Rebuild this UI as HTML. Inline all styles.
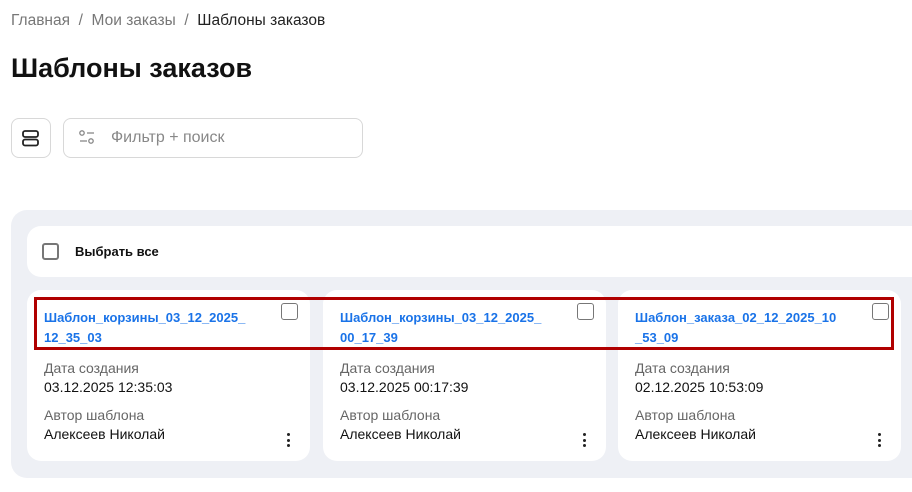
<!DOCTYPE html>
<html><head><meta charset="utf-8"><style>
*{box-sizing:border-box;margin:0;padding:0}
body{width:912px;height:492px;background:#fff;font-family:"Liberation Sans",sans-serif;position:relative;overflow:hidden;color:#111}
.a{position:absolute}
.bc{left:11px;top:12px;font-size:15.5px;color:#777}
.bc b{font-weight:normal;color:#222}
h1{position:absolute;left:11px;top:53px;font-size:27px;font-weight:bold;color:#111}
.btn{left:11px;top:118px;width:40px;height:40px;border:1px solid #d8d8d8;border-radius:8px}
.search{left:63px;top:118px;width:300px;height:40px;border:1px solid #d8d8d8;border-radius:8px}
.panel{left:11px;top:210px;width:920px;height:268px;background:#eef0f5;border-radius:16px}
.sel{left:27px;top:226px;width:900px;height:51px;background:#fff;border-radius:14px}
.cb{width:17px;height:17px;border:2px solid #777;border-radius:3px;background:#fff}
.card{top:290px;width:283px;height:171px;background:#fff;border-radius:14px}
.t{position:absolute;left:17px;top:18px;font-size:13px;font-weight:bold;color:#1a73e8;line-height:20px}
.l{position:absolute;left:17px;font-size:14px;color:#666}
.v{position:absolute;left:17px;font-size:14px;color:#111}
.dots{position:absolute;left:260px;top:143px;width:3px}
.dots i{display:block;width:3px;height:3px;background:#222;border-radius:50%;margin-bottom:2.5px}
.red{left:34px;top:297px;width:860px;height:53px;border:3px solid #b00000}
</style></head><body>
<div class="a bc">Главная &nbsp;/&nbsp; Мои заказы &nbsp;/&nbsp; <b>Шаблоны заказов</b></div>
<h1>Шаблоны заказов</h1>
<div class="a btn"><svg width="40" height="40" style="position:absolute;left:-1px;top:-1px"><rect x="12" y="13" width="15" height="6" rx="2" fill="none" stroke="#222" stroke-width="1.8"/><rect x="12" y="21.5" width="15" height="6" rx="2" fill="none" stroke="#222" stroke-width="1.8"/></svg></div>
<div class="a search"><svg width="20" height="20" style="position:absolute;left:14px;top:10px"><circle cx="4" cy="4" r="2.2" fill="none" stroke="#888" stroke-width="1.3"/><line x1="9" y1="4" x2="16" y2="4" stroke="#888" stroke-width="1.3"/><line x1="2" y1="12" x2="9" y2="12" stroke="#888" stroke-width="1.3"/><circle cx="13" cy="12" r="2.2" fill="none" stroke="#888" stroke-width="1.3"/></svg><span style="position:absolute;left:47px;top:10px;font-size:16px;color:#888">Фильтр + поиск</span></div>
<div class="a panel"></div>
<div class="a sel"><div class="a cb" style="left:15px;top:17px"></div><span style="position:absolute;left:48px;top:18px;font-size:13px;font-weight:bold">Выбрать все</span></div>

<div class="a card" style="left:27px"><div class="t">Шаблон_корзины_03_12_2025_<br>12_35_03</div><div class="a cb" style="left:254px;top:13px;border-width:1.5px"></div>
<div class="l" style="top:70px">Дата создания</div><div class="v" style="top:89px">03.12.2025 12:35:03</div>
<div class="l" style="top:117px">Автор шаблона</div><div class="v" style="top:136px">Алексеев Николай</div><div class="dots"><i></i><i></i><i></i></div></div>

<div class="a card" style="left:323px"><div class="t">Шаблон_корзины_03_12_2025_<br>00_17_39</div><div class="a cb" style="left:254px;top:13px;border-width:1.5px"></div>
<div class="l" style="top:70px">Дата создания</div><div class="v" style="top:89px">03.12.2025 00:17:39</div>
<div class="l" style="top:117px">Автор шаблона</div><div class="v" style="top:136px">Алексеев Николай</div><div class="dots"><i></i><i></i><i></i></div></div>

<div class="a card" style="left:618px"><div class="t">Шаблон_заказа_02_12_2025_10<br>_53_09</div><div class="a cb" style="left:254px;top:13px;border-width:1.5px"></div>
<div class="l" style="top:70px">Дата создания</div><div class="v" style="top:89px">02.12.2025 10:53:09</div>
<div class="l" style="top:117px">Автор шаблона</div><div class="v" style="top:136px">Алексеев Николай</div><div class="dots"><i></i><i></i><i></i></div></div>

<div class="a red"></div>
</body></html>
